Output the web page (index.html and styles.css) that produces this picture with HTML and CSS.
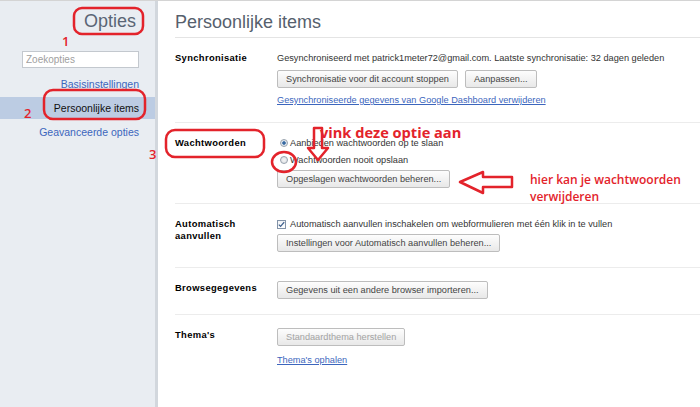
FILE: index.html
```html
<!DOCTYPE html>
<html>
<head>
  <meta charset="utf-8">
  <link rel="stylesheet" href="styles.css">
  <title>Opties - Persoonlijke items</title>
</head>
<body>
  <div class="app">
    <div class="sidebar">
      <h1 class="side-title">Opties</h1>
      <input class="search" type="text" placeholder="Zoekopties">
      <ul class="nav">
        <li><a href="#">Basisinstellingen</a></li>
        <li class="active">Persoonlijke items</li>
        <li><a href="#">Geavanceerde opties</a></li>
      </ul>
    </div>

    <div class="content">
      <h2 class="page-title">Persoonlijke items</h2>

      <div class="section first">
        <div class="label">Synchronisatie</div>
        <div class="body">
          <div class="line">Gesynchroniseerd met patrick1meter72@gmail.com. Laatste synchronisatie: 32 dagen geleden</div>
          <div class="btn-row">
            <button class="btn" type="button">Synchronisatie voor dit account stoppen</button>
            <button class="btn" type="button">Aanpassen...</button>
          </div>
          <div class="line link-line"><a href="#">Gesynchroniseerde gegevens van Google Dashboard verwijderen</a></div>
        </div>
      </div>

      <div class="section">
        <div class="label">Wachtwoorden</div>
        <div class="body">
          <div class="line"><span class="radio checked"></span>Aanbieden wachtwoorden op te slaan</div>
          <div class="line gap"><span class="radio"></span>Wachtwoorden nooit opslaan</div>
          <div class="btn-row tight">
            <button class="btn" type="button">Opgeslagen wachtwoorden beheren...</button>
          </div>
        </div>
      </div>

      <div class="section">
        <div class="label">Automatisch<br>aanvullen</div>
        <div class="body">
          <div class="line">
            <span class="check">
              <svg width="7" height="7" viewBox="0 0 7 7"><path d="M0.8 3.6 L2.6 5.4 L6.2 1.2" fill="none" stroke="#3d5f8c" stroke-width="1.3"/></svg>
            </span>Automatisch aanvullen inschakelen om webformulieren met één klik in te vullen
          </div>
          <div class="btn-row tight">
            <button class="btn" type="button">Instellingen voor Automatisch aanvullen beheren...</button>
          </div>
        </div>
      </div>

      <div class="section">
        <div class="label">Browsegegevens</div>
        <div class="body">
          <div class="btn-row flush">
            <button class="btn" type="button">Gegevens uit een andere browser importeren...</button>
          </div>
        </div>
      </div>

      <div class="section">
        <div class="label">Thema's</div>
        <div class="body">
          <div class="btn-row flush">
            <button class="btn" type="button" disabled>Standaardthema herstellen</button>
          </div>
          <div class="line link-line wide"><a href="#">Thema's ophalen</a></div>
        </div>
      </div>
    </div>
  </div>

  <!-- red annotations drawn over the screenshot -->
  <div class="marks">
    <svg width="700" height="407" viewBox="0 0 700 407">
      <g fill="none" stroke="#e3232b" stroke-width="2.5" stroke-linejoin="round">
        <rect x="74" y="8" width="69" height="26" rx="8"/>
        <rect x="44" y="90" width="101" height="29" rx="9"/>
        <rect x="166" y="130" width="98" height="27" rx="9"/>
        <ellipse cx="284" cy="162" rx="12" ry="10"/>
        <polygon points="314,128 322,128 322,148 328,148 318,160 308,148 314,148"/>
        <polygon points="460,182 483,172 483,177 512,177 512,187 483,187 483,193"/>
      </g>
    </svg>
    <span class="num n1">1</span>
    <span class="num n2">2</span>
    <span class="num n3">3</span>
    <span class="note vink">vink deze optie aan</span>
    <span class="note hier">hier kan je wachtwoorden<br>verwijderen</span>
  </div>
</body>
</html>
```

FILE: styles.css
```css
:root {
  --side-bg: #e9edf2;
  --side-sel: #bccce3;
  --link: #3c66bd;
  --line: #ececec;
  --mark: #e3232b;
}

* {
  box-sizing: border-box;
}

body {
  margin: 0;
  position: relative;
  height: 407px;
  overflow: hidden;
  font-family: "Liberation Sans", Arial, sans-serif;
  font-size: 9.2px;
  color: #333;
  background: #fff;
}

.app {
  display: flex;
  height: 407px;
  border-top: 1px solid #d4d4d4;
}

/* left column */
.sidebar {
  width: 158px;
  flex-shrink: 0;
  background: var(--side-bg);
  border-right: 3px solid #d2d7dd;
  padding-top: 9px;
}

.side-title {
  margin: 0;
  padding-right: 19px;
  text-align: right;
  font-size: 18px;
  line-height: 22px;
  font-weight: normal;
  color: #5a6575;
}

.search {
  display: block;
  width: 117px;
  height: 17px;
  margin: 19px 0 0 22px;
  padding: 0 3px;
  border: 1px solid #c3c8ce;
  background: #fff;
  font-family: inherit;
  font-size: 10px;
  outline: none;
}

.search::placeholder {
  color: #a0a0a0;
}

.nav {
  list-style: none;
  margin: 5px 0 0 0;
  padding: 0;
}

.nav li {
  height: 22px;
  line-height: 22px;
  margin-bottom: 2px;
  padding-right: 16px;
  text-align: right;
  font-size: 10.5px;
}

.nav a {
  color: var(--link);
  text-decoration: none;
}

.nav li.active {
  background: var(--side-sel);
  color: #111;
}

/* right column */
.content {
  flex: 1;
  padding-left: 17px;
}

.page-title {
  margin: 0;
  padding: 10px 0 4px 0;
  font-size: 18px;
  line-height: 22px;
  font-weight: normal;
  color: #56606d;
  border-bottom: 1px solid #e4e4e4;
}

.section {
  display: grid;
  grid-template-columns: 102px 1fr;
  padding: 13px 0 15px 0;
  border-top: 1px solid var(--line);
}

.section.first {
  border-top: 0;
}

.label {
  padding-top: 1px;
  font-weight: bold;
  font-size: 9.4px;
  letter-spacing: 0.35px;
  line-height: 12px;
  color: #000;
}

.line {
  display: flex;
  align-items: center;
  height: 14px;
  white-space: nowrap;
}

.line.gap {
  margin-top: 3px;
}

.link-line {
  margin-top: 5px;
}

.link-line.wide {
  margin-top: 7px;
}

.line a {
  color: var(--link);
}

.btn-row {
  display: flex;
  gap: 7px;
  margin-top: 5px;
}

.btn-row.tight {
  margin-top: 3px;
}

.btn-row.flush {
  margin-top: 0;
}

.btn {
  height: 18px;
  padding: 0 8px;
  border: 1px solid #bdbdbd;
  border-radius: 2px;
  background: linear-gradient(#fdfdfd, #e8e8e8);
  font-family: inherit;
  font-size: 9.2px;
  color: #444;
  line-height: 16px;
}

.btn:disabled {
  color: #a3a3a3;
}

.radio {
  width: 8px;
  height: 8px;
  margin: 0 2px 0 3px;
  border: 1px solid #98a2ad;
  border-radius: 50%;
  background: radial-gradient(circle, #f4f4f4 0, #d9dde2 100%);
}

.radio.checked {
  background: radial-gradient(circle, #2f5f96 0, #3f72aa 35%, #d9e2ec 45%, #eef1f4 100%);
}

.check {
  display: flex;
  align-items: center;
  justify-content: center;
  width: 9px;
  height: 9px;
  margin-right: 4px;
  border: 1px solid #8393a8;
  background: linear-gradient(#f1f3f6, #ffffff);
}

/* annotations */
.marks {
  position: absolute;
  left: 0;
  top: 0;
  width: 700px;
  height: 407px;
  pointer-events: none;
}

.marks svg {
  position: absolute;
  left: 0;
  top: 0;
}

.num,
.note {
  position: absolute;
  font-family: "Open Sans", "Liberation Sans", sans-serif;
  color: var(--mark);
  white-space: nowrap;
}

.num {
  font-size: 13px;
  font-weight: 600;
  line-height: 16px;
}

.n1 { left: 62px; top: 33px; }
.n2 { left: 24px; top: 105px; }
.n3 { left: 149px; top: 146px; }

.vink {
  left: 320px;
  top: 123px;
  font-size: 14.6px;
  font-weight: 700;
  line-height: 18px;
}

.hier {
  left: 530px;
  top: 171px;
  font-size: 12px;
  font-weight: 600;
  line-height: 17px;
}
```
